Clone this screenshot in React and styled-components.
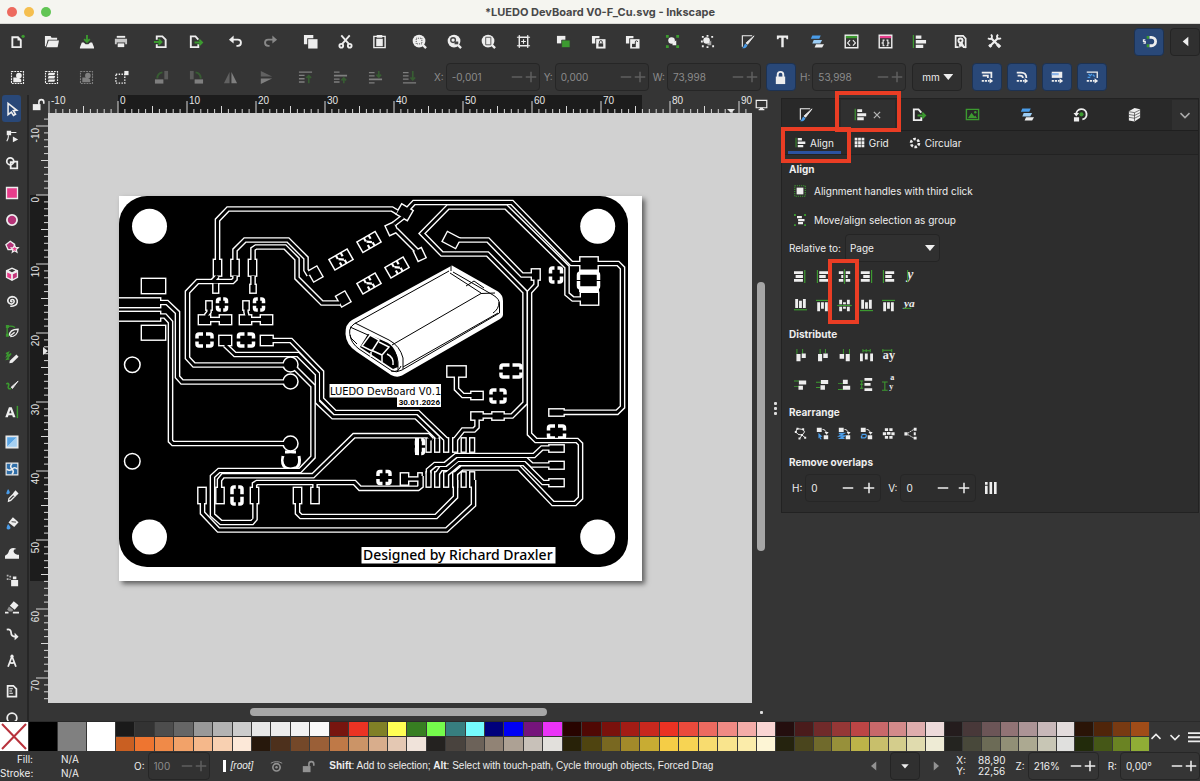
import React, { useId } from 'react'
import styled, { createGlobalStyle } from 'styled-components';

const GlobalStyle = createGlobalStyle`
  *{
       box-sizing:border-box;
  }
  body {
    margin: 0;
    padding: 0;
    background:#353535;
    color:#eee;
    font-family:Inter, "Liberation Sans", sans-serif;
    font-size:10px;
    line-height:14px;
  }
  button,input,select{
       font:inherit;
       color:inherit;
       margin:0;
       padding:0;
       border:0;
       background:transparent;
       outline:0;
  }
  h1,h2,p{
       margin:0;
       padding:0;
       font-size:inherit;
  }
`;

const green = '#3c9a30';
const blue = '#4a9ce8';
const pink = '#e83e8c';

const Window = styled.div`
height:100vh;
display:flex;
flex-direction:column;
overflow:hidden;
`;
const TitleBar = styled.header`
     height:24px;
     flex:none;
     display:grid;
     grid-template-columns:1fr auto 1fr;
     align-items:center;
     background:#f5f5f0;
     border-bottom:1px solid #d8d8d4;
     color:#484848;
     `;
const Lights = styled.div`
     display:flex;
     gap:7px;
     padding-left:7px;
     `;
const Light = styled.button`
     width:10px;
     height:10px;
     border-radius:50%;
     background:${props => props.$color};
     `;
const Title = styled.h1`
     font-size:11px;
     font-weight:700;
     `;
const Toolbar = styled.div`
     height:${props => props.$tall ? '36px' : '35px'};
     flex:none;
     display:flex;
     align-items:center;
     `;
const IconRow = styled.div`
     display:flex;
     flex:0 1 ${props => props.$basis};
     gap:6px;
     `;
const IconGroup = styled.div`
     display:flex;
     flex:${props => props.$n} 1 0;
     `;
const ToolButton = styled.button`
     height:28px;
     flex:1 1 0;
     min-width:0;
     display:flex;
     align-items:center;
     justify-content:center;
     opacity:${props => props.$dim ? 0.4 : 1};
     `;
const BlueButton = styled.button`
     width:30px;
     height:28px;
     flex:none;
     display:flex;
     align-items:center;
     justify-content:center;
     background:${props => props.$plain ? '#303030' : '#294878'};
     border:1px solid ${props => props.$plain ? '#242424' : '#1d3252'};
     border-radius:4px;
     `;
const ButtonRow = styled.div`
     display:flex;
     gap:${props => props.$gap};
     margin-left:${props => props.$left};
     `;
const Svg = styled.svg`
     display:block;
     flex:none;
     fill:currentColor;
     overflow:visible;
     `;

const FieldGroup = styled.div`
     display:flex;
     align-items:center;
     gap:${props => props.$tight ? '2px' : '3px'};
     margin-left:${props => props.$left || '4px'};
     color:${props => props.$tight ? '#8c8c8c' : '#eee'};
     `;
const FieldBox = styled.div`
     display:flex;
     align-items:center;
     width:${props => props.$w};
     height:28px;
     padding-left:5px;
     padding-right:1px;
     border:1px solid #262626;
     border-radius:4px;
     background:${props => props.$off ? '#323232' : 'transparent'};
     color:${props => props.$off ? '#8c8c8c' : '#eee'};
     `;
const FieldInput = styled.input`
     flex:1;
     width:0;
     min-width:0;
     `;
const StepButton = styled.button`
     width:${props => props.$w};
     height:20px;
     display:flex;
     align-items:center;
     justify-content:center;
     opacity:${props => props.$off ? 0.5 : 1};
     `;
const SelectWrap = styled.div`
     position:relative;
     width:${props => props.$w};
     height:28px;
     margin-left:${props => props.$left || '0'};
     `;
const SelectBox = styled.select`
     width:100%;
     height:100%;
     padding-left:${props => props.$pad || '4px'};
     appearance:none;
     border:1px solid #242424;
     border-radius:4px;
     background:#303030;
     `;
const SelectArrow = styled.span`
     position:absolute;
     right:${props => props.$right || '5px'};
     top:11px;
     width:10px;
     height:6px;
     background:#eee;
     clip-path:polygon(0 0, 100% 0, 50% 100%);
     pointer-events:none;
     `;

const Body = styled.div`
     flex:1;
     min-height:0;
     display:flex;
     `;
const Toolbox = styled.nav`
     width:29px;
     flex:none;
     overflow:hidden;
     border-right:2px solid #262626;
     `;
const ToolGroup = styled.div`
     padding-bottom:3px;
     `;
const Tool = styled.button`
     width:19px;
     height:27px;
     margin-left:2px;
     display:flex;
     align-items:center;
     justify-content:center;
     border-radius:3px;
     background:${props => props.$active ? '#294878' : 'transparent'};
     `;
const Editor = styled.main`
     flex:1;
     min-width:0;
     display:grid;
     grid-template-columns:19px 1fr 18px;
     grid-template-rows:18px 1fr 18px;
     `;
const Corner = styled.div`
     display:flex;
     align-items:center;
     justify-content:center;
     `;
const RulerBox = styled.div`
     overflow:hidden;
     font-family:"Liberation Sans", sans-serif;
     font-size:10px;
     `;
const Canvas = styled.div`
     background:#d1d1d1;
     overflow:hidden;
     padding:83px 0 0 71px;
     `;
const Page = styled.svg`
     display:block;
     width:523px;
     height:385px;
     background:#fff;
     box-shadow:3px 3px 5px rgba(0,0,0,0.55);
     `;
const VTrack = styled.div`
     display:grid;
     grid-template-rows:169fr 269fr 152fr;
     justify-content:center;
     `;
const HTrack = styled.div`
     display:grid;
     grid-template-columns:202fr 297fr 205fr;
     align-content:center;
     `;
const Thumb = styled.div`
     grid-row:${props => props.$across ? 1 : 2};
     grid-column:${props => props.$across ? 2 : 1};
     min-width:8px;
     min-height:8px;
     border-radius:4px;
     background:#a6a6a6;
     `;
const Handle = styled.div`
     width:11px;
     flex:none;
     display:flex;
     flex-direction:column;
     align-items:center;
     justify-content:center;
     gap:2px;
     `;
const Dot = styled.i`
     width:3px;
     height:3px;
     border-radius:1px;
     background:#ddd;
     `;
const Side = styled.aside`
     flex:0 0 419px;
     padding:3px 1px 0 0;
     background:#353535;
     `;
const Panel = styled.section`
     position:relative;
     border:1px solid #222;
     background:#2d2d2d;
     padding-bottom:6px;
     `;
const TabBar = styled.div`
     height:32px;
     display:flex;
     align-items:center;
     padding-left:5px;
     background:#292929;
     border-bottom:1px solid #1f1f1f;
     `;
const Tab = styled.button`
     width:${props => props.$active ? '54px' : '36px'};
     height:30px;
     margin-right:${props => props.$active ? '5px' : '18px'};
     display:flex;
     align-items:center;
     justify-content:center;
     gap:5px;
     background:${props => props.$active ? '#303030' : 'transparent'};
     `;
const MoreTabs = styled.button`
     width:26px;
     height:30px;
     margin-left:auto;
     display:flex;
     align-items:center;
     justify-content:center;
     background:#303030;
     color:#aaa;
     `;
const SubTabs = styled.div`
     height:24px;
     display:flex;
     gap:6px;
     padding-left:6px;
     background:#2a2a2a;
     border-bottom:1px solid #222;
     `;
const SubTab = styled.button`
     display:flex;
     align-items:center;
     gap:4px;
     padding:3px 7px 0;
     border-bottom:3px solid ${props => props.$active ? '#2b52a0' : 'transparent'};
     `;
const Heading = styled.h2`
     padding-left:7px;
     height:14px;
     margin-top:${props => props.$top || '7px'};
     font-weight:700;
     `;
const Option = styled.button`
     display:flex;
     align-items:center;
     gap:8px;
     height:29px;
     padding-left:12px;
     `;
const PanelRow = styled.div`
     display:flex;
     align-items:center;
     gap:4px;
     height:${props => props.$h || '28px'};
     padding-left:7px;
     `;
const Strip = styled.div`
     display:flex;
     height:29px;
     padding-left:7px;
     `;
const StripButton = styled.button`
     width:22px;
     display:flex;
     align-items:center;
     justify-content:center;
     `;
const Mark = styled.div`
     position:absolute;
     left:${props => props.$x}px;
     top:${props => props.$y}px;
     width:${props => props.$w}px;
     height:${props => props.$h}px;
     border:4px solid #ea3d24;
     pointer-events:none;
     `;

const Palette = styled.div`
     height:30px;
     flex:none;
     display:flex;
     border-top:1px solid #2a2a2a;
     `;
const BigSwatch = styled.button`
     width:28px;
     height:29px;
     flex:none;
     margin-right:1px;
     background:${props => props.$color};
     `;
const Swatches = styled.div`
     flex:1;
     display:grid;
     grid-template-rows:14px 14px;
     row-gap:1px;
     `;
const SwatchRow = styled.div`
     display:grid;
     grid-template-columns:repeat(34, 26fr) repeat(20, 25fr);
     `;
const Swatch = styled.button`
     background:${props => props.$color};
     border-right:1px solid #3a3a3a;
     `;
const PaletteTools = styled.div`
     width:50px;
     flex:none;
     display:flex;
     align-items:center;
     justify-content:flex-end;
     gap:7px;
     `;

const StatusBar = styled.footer`
     height:30px;
     flex:none;
     display:flex;
     align-items:center;
     white-space:nowrap;
     `;
const FillStroke = styled.dl`
     width:130px;
     margin:0;
     display:grid;
     grid-template-columns:33px auto;
     column-gap:28px;
     text-align:right;
     dd{
          margin:0;
          text-align:left;
     }
     `;
const Layer = styled.button`
     margin-left:13px;
     padding-left:5px;
     border-left:3px solid #fff;
     font-family:"Liberation Sans", sans-serif;
     font-style:italic;
     line-height:12px;
     `;
const StatusIcon = styled.button`
     margin-left:${props => props.$left};
     opacity:0.5;
     `;
const Hint = styled.p`
     flex:1;
     margin-left:14px;
     font-family:"Liberation Sans", sans-serif;
     `;
const Position = styled.div`
     display:grid;
     grid-template-columns:auto auto;
     column-gap:12px;
     line-height:11px;
     margin-left:14px;
     `;

const ln = { fill: 'none', stroke: 'currentColor', strokeWidth: 2 };
const thin = { fill: 'none', stroke: 'currentColor', strokeWidth: 1.2 };
const dark = '#353535';
const serif = { fontSize: 12, fontWeight: 700, fontFamily: 'Liberation Serif, serif' };
const rule = { fill: 'none', stroke: green, strokeWidth: 1.3 };

const icons = {
     new: <><path {...ln} d="M2.500 3.500h6l3 3v7.500h-9z" /><path d="M8 3v4h4z" /><circle cx="14" cy="2.500" r="1.800" fill={green} /></>,
     open: <><path d="M1 2h6l1 2h6v2H4l-2 7H1z" /><path d="M5 7h11l-1.500 7H2.500z" /></>,
     save: <><path d="M3 9h2l2 2h3l2-2h2l2 5v1.500H1V14z" /><path stroke={green} strokeWidth="2" fill="none" d="M8.500 1v7M5.500 5.500l3 3 3-3" /></>,
     print: <><path d="M4 2h9v2H4z" /><path opacity="0.800" d="M2 5h13v6h-2V9H4v2H2z" /><path d="M5 10h7v4H5z" /></>,
     import: <><path {...ln} d="M4 6V2.500h6l3.500 3.500v8H4V11" /><path stroke={green} strokeWidth="2" fill="none" d="M1 8.500h7M6 5.500l3 3-3 3" /></>,
     export: <><path {...ln} d="M11 6L8 2.500H3v11.500h8V11" /><path stroke={green} strokeWidth="2" fill="none" d="M7 9h7M12 6l3 3-3 3" /></>,
     undo: <><path {...ln} d="M4 6h6.500a3.300 3.300 0 0 1 0 6.600H9" /><path d="M6 1.500V10L1 6z" /></>,
     redo: <g opacity="0.450"><path {...ln} d="M12 6H5.500a3.300 3.300 0 0 0 0 6.600H7" /><path d="M10 1.500V10l5-4z" /></g>,
     copy: <><path d="M1 1h10v3.500H4.500V11H1z" /><path d="M5.500 5.500h10v10h-10z" /></>,
     cut: <><path {...ln} d="M3.500 1.500l8 9M12.500 1.500l-8 9" /><circle {...ln} cx="3.500" cy="12.500" r="2" /><circle {...ln} cx="12.500" cy="12.500" r="2" /></>,
     paste: <><path {...ln} strokeWidth="1.500" d="M2 2.500h12v12H2z" /><path d="M5 1h6v3H5zM4.500 5h7v8h-7z" /></>,
     zoomSel: <><circle cx="7.500" cy="7.500" r="6.800" /><path stroke="currentColor" strokeWidth="2.500" d="M11 11l4 4" /><path d="M4.500 4.500h6v6h-6z" fill="none" stroke="#444" strokeDasharray="1 1" /></>,
     zoomDraw: <><circle cx="7.500" cy="7.500" r="6.800" /><path stroke="currentColor" strokeWidth="2.500" d="M11 11l4 4" /><circle cx="6.500" cy="6.500" r="2.500" fill="none" stroke="#444" strokeWidth="1.500" /><path d="M8 8h4v3H8z" fill="#444" /></>,
     zoomPage: <><circle cx="7.500" cy="7.500" r="6.800" /><path stroke="currentColor" strokeWidth="2.500" d="M11 11l4 4" /><path d="M5 3.500h5.500v8H5z" fill="none" stroke="#555" /></>,
     zoomCenter: <><path {...thin} strokeWidth="1.500" d="M3.500 3.500h9v9h-9z" /><path {...thin} d="M8 5.500v5M5.500 8h5M3.500 1v2.500H1M12.500 1v2.500H15M3.500 15v-2.500H1M12.500 15v-2.500H15" /></>,
     dup: <><path d="M1 2h9v8H1z" /><path fill={green} d="M6 6.500h9v8H6z" stroke={dark} strokeWidth="0.800" /></>,
     clone: <><path d="M1 2h8v2.500H4.500V10H1z" /><path d="M5.500 5.500h10v10h-10z" /><path fill={dark} d="M8 10h5v3.500H8z" /><path d="M9 10V8.500a1.500 1.500 0 0 1 3 0V10" fill="none" stroke={dark} /></>,
     unlink: <><path d="M1 2h8v2.500H4.500V10H1z" /><path d="M5.500 5.500h10v10h-10z" /><path fill={dark} d="M7.500 10.500h4V14h-4z" /><path d="M11 11V8.500a1.200 1.200 0 0 1 2.500 0" fill="none" stroke={dark} /></>,
     group: <><circle cx="7" cy="7" r="3.500" /><path d="M8 9l4-2v5H8z" /><path fill={green} d="M1 1h3v3H1zM12 1h3v3h-3zM1 12h3v3H1zM12 12h3v3h-3z" /></>,
     ungroup: <><circle cx="7" cy="7" r="3.500" /><path opacity="0.600" d="M8 10l4-3v5H8z" /><path d="M2 2h2v2H2zM7 1h2v2H7zM12 2h2v2h-2zM1 7h2v2H1zM2 12h2v2H2zM7 13h2v2H7zM13 12h2v2h-2z" /></>,
     fill: <><path {...thin} d="M2.500 13.500V1.800H13" /><path d="M15 2L8 11 6.500 9.500z" stroke="currentColor" /><path fill={blue} d="M5.500 10l2.500 2C6.500 15.500 4 15.500 2 15c2-.5 2-3 3.500-5z" /></>,
     text: <path d="M2 1.500h12v4h-1.700L11.800 4H9.300v10h-2.600V4H4.200l-.5 1.500H2z" />,
     layers: <><path fill={blue} d="M3.500 1.500h9L11 5H2z" /><path fill="#9ccdf5" d="M5 6.500h9L12 10H3.500z" /><path d="M7.500 11h8.500l-2 3.500H6z" /></>,
     xml: <><path {...thin} strokeWidth="1.500" d="M1.300 1.300h13.400v13.400H1.300z" /><path fill={green} d="M2 2h12v2.500H2z" /><path {...thin} d="M6.500 6.500L3.800 9.500l2.700 3M9.500 6.500l2.700 3-2.700 3" /></>,
     selectors: <><path {...thin} strokeWidth="1.500" d="M1.300 1.300h13.400v13.400H1.300z" /><path fill={pink} d="M2 2h12v2.500H2z" /><path {...thin} d="M7 6.500H5.500V9l-1 .5 1 .5v2.500H7M9 6.500h1.500V9l1 .5-1 .5v2.500H9" /></>,
     align: <><path fill={green} d="M.8 1h1.400v14H.8z" /><path d="M4 1.500h6v3.500H4zM4 6.500h11V10H4zM4 11.500h8V15H4z" /></>,
     docprops: <><path {...ln} strokeWidth="1.800" d="M6 14H2.800V2h8L13.500 5v9h-3" /><circle cx="8" cy="7" r="2.200" {...ln} /><path d="M6 10l1 5 1.500-2 5 2.500L10 9z" /></>,
     prefs: <><path {...ln} strokeWidth="2.300" d="M4.500 4.500l9 9M11.500 4.500l-9 9" /><path {...ln} d="M1 4.500q3 2 4-.5T4 1M15 4.500q-3 1.500-4-.5t1-3" /><path {...ln} strokeWidth="3.400" d="M11 11l3 3M4.500 11.500l-2 2" /></>,
     snap: <><path fill="none" stroke="currentColor" strokeWidth="3" d="M8 3.500h2a4.500 4.500 0 0 1 0 9H8" /><path fill={green} d="M5 2h2.500v3H5zM5 11h2.500v3H5z" /><path {...thin} d="M3.500 6.300H1.500V8h2v1.700h-2" /></>,
     left: <path d="M11 3v10L5 8z" />,
     selAll: <><path {...thin} strokeDasharray="2 1" d="M1.600 1.600h12.800v12.800H1.600z" /><circle cx="9.500" cy="6" r="3" /><path d="M3.500 8h5l3.500 2v3H3.500z" /></>,
     selLayers: <><path {...thin} strokeDasharray="2 1" d="M1.600 1.600h12.800v12.800H1.600z" /><path d="M5 3h7l-1 2.500H4zM5 6.500h7l-1 2.500H4zM5 10h7l-1 2.500H4z" /></>,
     selTouch: <><path {...thin} strokeWidth="1.500" strokeDasharray="1.500 1.500" d="M2 4.500h9.500V14H2z" /><path d="M11 1h4.500v4.500H11z" /></>,
     rotL: <><path d="M1 10h9v4.500H1z" /><path opacity="0.500" d="M11 1h4v9h-4z" /><path stroke={green} fill="none" strokeWidth="2" d="M3.500 9C3.500 5 6 3 9 2.500" /></>,
     rotR: <><path d="M6 10h9v4.500H6z" /><path opacity="0.500" d="M1 1h4v9H1z" /><path stroke={green} fill="none" strokeWidth="2" d="M12.500 9c0-4-2.500-6-5.500-6.500" /></>,
     flipH: <><path opacity="0.600" d="M7 2v12H1z" /><path d="M9 2v12h6z" /></>,
     flipV: <><path opacity="0.600" d="M3 7V1l12 6z" /><path d="M3 9v6l12-6z" /></>,
     top: <><path d="M1 1.500h14v1.500H1zM1 5h6v1.500H1zM1 8.500h6v1.500H1zM1 12h6v1.500H1z" /><path stroke={green} fill="none" strokeWidth="1.800" d="M11.500 14V6M9 8.500L11.500 6 14 8.500" /></>,
     raise: <><path d="M1 1.500h6v1.500H1zM1 5h14v2H1zM1 9h6v1.500H1zM1 12h6v1.500H1z" /><path stroke={green} fill="none" strokeWidth="1.800" d="M11.500 14V9M9 11l2.500-2.500L14 11" /></>,
     lower: <><path d="M1 2h6v1.500H1zM1 5.500h6v1.500H1zM1 9h14v2H1zM1 13h6v1.500H1z" /><path stroke={green} fill="none" strokeWidth="1.800" d="M11.500 1v6M9 5l2.500 2.500L14 5" /></>,
     bottom: <><path d="M1 2h6v1.500H1zM1 5.500h6v1.500H1zM1 9h6v1.500H1zM1 13h14v1.500H1z" /><path stroke={green} fill="none" strokeWidth="1.800" d="M11.500 1v9M9 8l2.500 2.500L14 8" /></>,
     lock: <><path d="M3 7h10v8H3z" /><path {...ln} d="M5 8V5a3 3 0 0 1 6 0v3" /></>,
     unlock: <><path d="M1 7.500h9.500V15H1z" /><path {...ln} d="M8.500 8V5a3 3 0 0 1 6 0v2" /></>,
     scaleStroke: <><path {...ln} d="M2 3h11v6M3 6.500h6V9" /><path {...ln} strokeDasharray="2.500 1" d="M2 12.500h9" /><path d="M11 9.500l4 3-4 3z" /></>,
     scaleCorner: <><path {...ln} d="M2 3h5q6 0 6 6M3 6.500h2.500Q9 6.500 9 9" /><path {...ln} strokeDasharray="2.500 1" d="M2 12.500h9" /><path d="M11 9.500l4 3-4 3z" /></>,
     moveGrad: <><path d="M2 2h12v7H2z" /><path fill="#8ab4e8" d="M2 3.500h8V6H2z" /><path {...ln} strokeDasharray="2.500 1" d="M2 12.500h9" /><path d="M11 9.500l4 3-4 3z" /></>,
     movePat: <><path {...thin} strokeWidth="1.500" d="M2 2.500h12v6.500" /><path fill="none" stroke={blue} strokeWidth="1.500" d="M4 4.500l2 2 2-2M9 5.500l2 2M3 8.500h3" /><path {...ln} strokeDasharray="2.500 1" d="M2 12.500h9" /><path d="M11 9.500l4 3-4 3z" /></>,
     pointer: <path {...ln} strokeWidth="1.800" d="M3.500 1.500l10 8-4 .5 2.500 4-2.300 1.300L7.300 11.500l-3.800 3z" />,
     node: <><path d="M2 2h5v5H2zM9 8.500l6 3.500-6 3z" /><path {...thin} d="M7 4h6M4 7q0 4-2 7" /></>,
     builder: <><circle {...ln} cx="6" cy="6" r="4" /><path {...ln} d="M9.500 6.500h4.500V14H6.500V7h4" /></>,
     rect: <path fill={pink} stroke="currentColor" strokeWidth="1.500" d="M1.700 1.700h12.600v12.600H1.700z" />,
     circle: <circle fill="#b53478" stroke="currentColor" strokeWidth="2" cx="8" cy="8" r="5.800" />,
     star: <><path fill="#b53478" stroke="currentColor" strokeWidth="1.500" d="M6 1.500L11 5 9.500 11h-6L1 5.500z" /><path fill={pink} stroke="currentColor" strokeWidth="1.300" d="M11 6l1.200 2.500 3 .3-2.300 2 .8 3.200-2.700-1.600L8.300 14l.8-3.200L7 9l3-.4z" /></>,
     box: <><path fill="#eee" d="M8 .5l7 3.300v8.500L8 16l-7-3.700V3.800z" /><path fill={pink} d="M2.500 6.200L7 8.200v5.500l-4.500-2.400z" /><path fill="#c2367a" d="M13.500 6.200L9 8.200v5.500l4.500-2.400z" /><path fill={dark} d="M8 2.200l3.800 1.900L8 6 4.200 4.100z" /></>,
     spiral: <path {...ln} strokeWidth="1.800" d="M8.500 8.500q-1.500 1-2-.5c0-2 3.500-2.500 4 .3 0 3-3.500 4-5.500 2.500C1.500 8 3.500 3.500 8 3c4 0 6.500 3 6 6.500-.5 3-4 5-8 4.500" />,
     pen: <><path {...ln} strokeWidth="1.500" d="M5 13.500c0-5 4-7.500 10-7.500 0 5-4 8.500-9 8.500M6 13.500l5-4" /><path stroke={green} fill="none" strokeWidth="1.500" d="M2.500 13V3q5-1.500 9 1" /><path fill={green} d="M1 1h3.500v3.500H1zM1 11h3.500v3.500H1z" /></>,
     pencil: <><path d="M13 4l2.500 2.500-7 7L5 14l.5-3z" /><path stroke={green} fill="none" strokeWidth="1.500" d="M1 3l3-1.500L2 6l5-3-5 6.500 3-.5" /></>,
     calli: <><path d="M15 3.500L8.500 12 7 10.500z" stroke="currentColor" /><path stroke={green} fill="none" strokeWidth="1.800" d="M1.500 7C4 5 5 7 4 9s0 4 3 3" /></>,
     textTool: <><path d="M4.500 2.500h3.200L12 14H9l-.7-2.300H4L3.300 14H.3zm1.600 3L4.800 9.400h2.700z" /><path fill={green} d="M13.300 1H15v14h-1.700z" /></>,
     gradient: <><path fill="#dcecf9" stroke="currentColor" strokeWidth="1.500" d="M1.300 1.300h13.400v13.400H1.300z" /><path fill="#5aa5e4" d="M2.500 2.500h11L2.500 13.500z" /><path fill="#a5cff1" d="M13.500 2.500v11h-11z" /></>,
     mesh: <><path fill="#2f6ea8" stroke="currentColor" strokeWidth="1.300" d="M1.300 1.300h13.400v13.400H1.300z" /><path {...ln} strokeWidth="1.800" d="M8 2q-3 3 0 6t0 6M2 8q3 3 6 0t6 0" /></>,
     dropper: <><path {...thin} strokeWidth="1.500" d="M4 14l.5-3 5-5 2 2-5 5z" /><path d="M9 5l3-3.500 3.500 3.500L12 8.500z" /><path fill={blue} d="M3.500 0q4 5 0 6t0-6z" /></>,
     bucket: <><path d="M9 1.500l6.500 5.500-5 5.500-6.500-5z" /><path fill="none" stroke={dark} d="M7.500 6.500l5 .5" /><path fill={blue} d="M3.500 9q5 5 1 6.500-5 0-1-6.500z" /></>,
     tweak: <path d="M0 14.500V11q3-1 4-4c1-5 6-6 9-3.500-4 0-4 4-1 5.500q2 1 4 1v4.500z" />,
     spray: <><path d="M7 8h8v7H7zM9 4h4v3H9z" /><path opacity="0.700" d="M2 2h2v2H2zM5 3h2v2H5zM2 6h2v2H2zM5 6.500h1.500V8H5z" /></>,
     eraser: <><path d="M10 1.500l5.500 4.500-4.500 5L5.500 6.500z" /><path opacity="0.500" d="M4.500 7.500l5 4L8 13H5L2.500 11z" /><path d="M0 13.500h4V15.500H0zM9 13.500h7V15.500H9z" /></>,
     connector: <><path {...ln} d="M2 3q5-1 5 3.500T12 11" /><path d="M11 6.500l4.500 4.500L11 15z" /></>,
     measure: <><path {...ln} d="M8 2.500L3.500 14.500M8 2.500L12.500 14.500M5 9.500q3 2 6 0" /><circle cx="8" cy="2.500" r="1.800" /></>,
     pages: <><path {...ln} d="M3 2h6.500L13 5.500V14.500H3z" /><path {...thin} d="M5 5.500h4M5 8h3M5 10.500h4" /></>,
     zoom: <><circle {...ln} cx="8" cy="8" r="5.500" /><path {...ln} d="M11 11l4 4" /></>,
     display: <><path {...thin} strokeWidth="1.500" d="M1.500 3h13v9h-13z" /><path d="M6 12h4v2H6zM4.500 13.500h7V15h-7z" /></>,
     close: <path {...ln} opacity="0.700" d="M3 3l10 10M13 3l-10 10" />,
     image: <><path fill="none" stroke={green} strokeWidth="1.500" d="M1.500 2.500h13v11h-13z" /><path fill={green} d="M3 12l4-6 3 4 1-1 2 3z" /><circle cx="11" cy="5.500" r="1.300" fill={green} /></>,
     history: <><path {...ln} d="M3.500 8a5.500 5.500 0 1 1 6.500 5.200" /><path d="M.5 6.500h6l-3 3.500zM1 11h5.500v4.500H1z" /><circle cx="9" cy="7.800" r="2.200" fill={green} /></>,
     objects: <><path d="M2 4.500l6-3.500 6 1.500v9L8 15.500l-6-1z" /><path stroke={dark} fill="none" strokeWidth="0.700" d="M2 5l6 1 6-3M2 8l6 1 6-3M2 11l6 1 6-3M8 6v9" /></>,
     down: <path {...ln} d="M2 5.500L8 11.500l6-6" />,
     up: <path {...ln} d="M2 10.500L8 4.500l6 6" />,
     grid: <path d="M1 1h4v4H1zM6 1h4v4H6zM11 1h4v4h-4zM1 6h4v4H1zM6 6h4v4H6zM11 6h4v4h-4zM1 11h4v4H1zM6 11h4v4H6zM11 11h4v4h-4z" />,
     circular: <circle fill="none" stroke="currentColor" strokeWidth="3.500" strokeDasharray="3.400 2.100" cx="8" cy="8" r="5.300" />,
     handles: <><path fill="none" stroke={green} strokeWidth="1.500" strokeDasharray="1.500 1.300" d="M1 1h14v14H1z" /><path d="M3.500 3.500h9v9h-9z" /></>,
     asGroup: <><path d="M4 2.500h6.500v3H4zM5.500 6.600H14v3H5.500zM5.500 10.700h6.500v3H5.500z" /><path fill={green} d="M0 0h2.500v2.500H0zM13.500 0H16v2.500h-2.500zM0 13.500h2.500V16H0zM13.500 13.500H16V16h-2.500z" /></>,
     aRightOut: <><path d="M0 1.500h11V5H0zM2 6.300h9v3.500H2zM0 11h11v3.500H0z" /><path fill={green} d="M12.500 0H14v16h-1.500z" /></>,
     aLeft: <><path d="M4 1.500h11V5H4zM4 6.300h8v3.500H4zM4 11h11v3.500H4z" /><path fill={green} d="M1 0h1.500v16H1z" /></>,
     aCenter: <><path d="M1 1.500h14V5H1zM4 6.300h8v3.500H4zM1 11h14v3.500H1z" /><path fill={dark} d="M6.500 0h3v16h-3z" /><path fill={green} d="M7.300-1h1.400v18H7.300z" /></>,
     aRight: <><path d="M1 1.500h11V5H1zM4 6.300h8v3.500H4zM1 11h11v3.500H1z" /><path fill={green} d="M13.500 0H15v16h-1.500z" /></>,
     vText: <><text x="0" y="10" {...serif} fontSize="14" fontStyle="italic">ya</text><path {...rule} d="M-1 11.500h10" /></>,
     hText: <><text x="4" y="11" {...serif} fontSize="17" fontStyle="italic">y</text><path {...rule} d="M4.500 0v15" /></>,
     dText: <><text x="1" y="12" {...serif} fontSize="15">ay</text><path {...rule} d="M1 1.500h11M1 0v4M12 0v4" /></>,
     dTextV: <><text x="10" y="3" {...serif} fontSize="10">a</text><text x="9" y="14" {...serif} fontSize="10">y</text><path {...rule} d="M3.500 5v10M0 5h7M0 15h7" /></>,
     dLeft: <><path fill={green} d="M3 0h1.200v6H3zM10 0h1.200v6H10z" /><path d="M3 6h5v9H3zM9.500 5.500h5V11h-5z" /></>,
     dCenter: <><path fill={green} d="M4.500 0h1.200v6H4.500zM11 0h1.200v5H11z" /><path d="M2.500 6h5v9h-5zM9 5.500h5.500V11H9z" /></>,
     dRight: <><path fill={green} d="M6 0h1.200v6H6zM13.500 0h1.200v6h-1.200z" /><path d="M2 6h5.500v6H2zM9.500 6h5v9h-5z" /></>,
     dGap: <><path fill={green} d="M3 0h1.200v4H3zM7 0h1.200v4H7zM12 0h1.200v4H12zM3 1.500h10v1.200H3z" /><path d="M0 5.500h3.500V15H0zM6 5.500h3.500V13H6zM12.500 5.500H16V15h-3.500z" /></>,
     swapA: <><path d="M1 1h6v5H1zM9.500 10h5.500v5H9.500z" /><path {...thin} d="M8 3q4 0 5 5" /><path d="M10.500 6h5L13 9.500z" /><path fill={blue} d="M3 7l5 5-2.500.3L7 15H5l-.8-2L3 14z" /></>,
     swapB: <><path d="M1 1h6v5H1zM9.500 10h5.500v5H9.500z" /><path {...thin} d="M8 3q4 0 5 5" /><path d="M10.500 6h5L13 9.500z" /><path fill="none" stroke={blue} strokeWidth="1.800" d="M1 8h6l-5 3h6l-5 3h5" /></>,
     swapC: <><path d="M1 1h6v5H1zM9.500 10h5.500v5H9.500z" /><path {...thin} d="M8 3q4 0 5 5" /><path d="M10.500 6h5L13 9.500z" /><path fill="none" stroke={blue} strokeWidth="1.500" d="M2 9h5q2 2-1 4.500H2q-1-2 1-3" /></>,
     rGraph: <><path {...thin} d="M4 2l7 1 2 3-3 4 3.500 3M2 6l3 3 5 1M4 2L2 6M7 14l3-4" /><path d="M3 .8h2.500v2.500H3zM10 1.500h2.500V4H10zM1 5h2.500v2.500H1zM8.500 8.500H11V11H8.500zM12.500 12H15v2.500h-2.500zM5.500 13H8v2.500H5.500z" /></>,
     rRandom: <path d="M3.500 1.500h4V5h-4zM9 1.500h4V5H9zM1 6.500h4V10H1zM6 6h4.500v3.500H6zM11.500 6.500h4V10h-4zM3.500 11h4v3.500h-4zM9 11h4v3.500H9z" />,
     rUnclump: <><path d="M.5 6.500h4v4h-4zM12 1h3.500v3.500H12zM12 12h3.500v3.500H12zM12 6.500h2.500V10H12z" /><path {...thin} strokeDasharray="2 1" d="M5 7.500L12 3M5 9.500l7 4" /></>,
     overlap: <path d="M0 0h3.500v3.500H0zM0 5h3.500v11H0zM6 0h3.500v16H6zM12 0h3.500v16H12z" />,
     eye: <><path {...thin} d="M1 4q7-4 14 0" /><circle {...ln} cx="8" cy="9" r="4.500" /><circle cx="8" cy="9" r="1.500" /></>,
     menu: <path d="M0 1.500h16v2.500H0zM0 7h16v2.500H0zM0 12.500h16V15H0z" />,
     triL: <path d="M11 2v12L4 8z" />,
     triR: <path d="M5 2v12l7-6z" />,
     triD: <path d="M2 5h12l-6 7z" />,
     minus: <path d="M1 7h14v2H1z" />,
     plus: <path d="M1 7h6V1h2v6h6v2H9v6H7V9H1z" />,
};
// the vertical alignment icons are the horizontal ones turned a quarter
const turned = { vBottomOut: 'aRightOut', vTop: 'aLeft', vMiddle: 'aCenter', vBottom: 'aRight', dTop: 'dLeft', dMid: 'dCenter', dBot: 'dRight', dGapV: 'dGap' };

const Icon = ({ name, size = 15 }) => (
     <Svg viewBox="0 0 16 16" width={size} height={size} aria-hidden="true">
          {turned[name]
               ? <g transform={name[0] === 'v' ? 'rotate(90 8 8)' : 'matrix(0 1 1 0 0 0)'}>{icons[turned[name]]}</g>
               : icons[name]}
     </Svg>
);

const NumberField = ({ label, value, width, step = '14px', off, tight, left }) => {
     const id = useId();
     return (
          <FieldGroup $tight={tight} $left={left}>
               <label htmlFor={id}>{label}</label>
               <FieldBox $w={width} $off={off}>
                    <FieldInput id={id} defaultValue={value} disabled={off} />
                    <StepButton $w={step} $off={off} disabled={off} aria-label="Decrease"><Icon name="minus" size={12} /></StepButton>
                    <StepButton $w={step} $off={off} disabled={off} aria-label="Increase"><Icon name="plus" size={12} /></StepButton>
               </FieldBox>
          </FieldGroup>
     );
}

const commands = [
     ['new', 'open', 'save', 'print'],
     ['import', 'export'],
     ['undo', 'redo'],
     ['copy', 'cut', 'paste'],
     ['zoomSel', 'zoomDraw', 'zoomPage', 'zoomCenter'],
     ['dup', 'clone', 'unlink'],
     ['group', 'ungroup'],
     ['fill', 'text', 'layers', 'xml', 'selectors', 'align'],
     ['docprops', 'prefs'],
];
const selection = [
     ['selAll', 'selLayers', 'selAll', 'selTouch'],
     ['rotL', 'rotR', 'flipH', 'flipV'],
     ['top', 'raise', 'lower', 'bottom'],
];
const tools = [
     ['pointer', 'node', 'builder'],
     ['rect', 'circle', 'star', 'box', 'spiral'],
     ['pen', 'pencil', 'calli', 'textTool'],
     ['gradient', 'mesh', 'dropper', 'bucket'],
     ['tweak', 'spray', 'eraser', 'connector', 'measure'],
     ['pages', 'zoom'],
];

const IconBar = ({ groups, basis, isDim }) => (
     <IconRow $basis={basis}>
          {groups.map((group, g) => (
               <IconGroup key={g} $n={group.length}>
                    {group.map((name, i) => (
                         <ToolButton key={i} aria-label={name} $dim={isDim && isDim(g, i)}><Icon name={name} /></ToolButton>
                    ))}
               </IconGroup>
          ))}
     </IconRow>
)

const STEP = 69;
const Ruler = ({ vertical }) => {
     const zero = vertical ? 82 : 70;
     const len = vertical ? 590 : 704;
     const pageLen = vertical ? 386 : 524;
     const ticks = [];
     for (let n = -11; n <= 92; n++) {
          const at = zero + n * STEP / 10;
          if (at < 0 || at > len) continue;
          const size = n % 10 === 0 ? 12 : n % 5 === 0 ? 7 : 4;
          ticks.push(vertical ? `M${19 - size} ${at}H19` : `M${at} ${18 - size}V18`);
     }
     const labels = [-10, 0, 10, 20, 30, 40, 50, 60, 70, 80, 90].filter(n => zero + n * STEP / 10 < len && zero + n * STEP / 10 > 0);
     return (
          <RulerBox>
               <svg width={vertical ? 19 : len} height={vertical ? len : 18} fill="#e6e6e6">
                    <rect x={vertical ? 1 : zero} y={vertical ? zero : 0} width={vertical ? 18 : pageLen} height={vertical ? pageLen : 18} fill="#1c1c1c" />
                    <path d={ticks.join('')} stroke="#d8d8d8" strokeWidth="1" fill="none" />
                    {labels.map(n => {
                         const at = zero + n * STEP / 10;
                         return vertical
                              ? <text key={n} transform={`translate(10 ${at + 2}) rotate(-90)`} textAnchor="end">{n}</text>
                              : <text key={n} x={at + 2} y="9">{n}</text>
                    })}
                    {vertical ? <path d="M14 234v8l5-4z" /> : <path d="M679 14h8l-4 4z" />}
               </svg>
          </RulerBox>
     );
}

const traces = [
     'M217.500 262V220L228 209H392L397 212',
     'M235 262V250L245 240H288L306 258V270L309 275',
     'M253 262V249L256 247H285L297 259V278L322 303H340',
     'M235 276V279L232.500 281.500H197.500L187.500 292V358L194 365H284',
     'M217.500 276L213 281', 'M253 276V287', 'M215.500 284V290',
     'M160 302.500H167L177.500 312.500V377L182 382H284',
     'M160 316H165L170.500 322V441L173 443.500H284',
     'M209 308V312L206 316', 'M246 308V312L247 316', 'M208 319.500H222', 'M249 319.500H263',
     'M272 340.500H291L321.500 372V399L335 412.500H418L446.500 440',
     'M225 345L235 354.500H298L317.500 374V402L333 416.700H416L438 438',
     'M295 368L313 386V457L300 470.500H219L212.500 476.500V515L221 522.500H252L255 519V502',
     'M219.500 490V480L223 475.700H313L354 435.700H428L432 440',
     'M254.500 490V484L257 482.500H354.500L360 488.300H418L421 486V476',
     'M202.500 502V513L218.500 530H446.500L473.500 505V480',
     'M297.500 502V513L301 516.500H436L455.500 497V480',
     'M315 490V483',
     'M428.500 474V470L435 464.500H445L456 455.500H534L542 448H552',
     'M437 474L441 468.500H447L458 459.500H526L532 465H552',
     'M446.500 474L459 463.500H524L543 482.500H552',
     'M455 474L462 468H519L553 503.500H575L580.500 498V444L577 440.500H536L529.500 434V292L536 285V278',
     'M455 440L463 430H474L477 427V418', 'M480 416H495',
     'M502 416H512L525 403V292L487.500 254H442L422 233.500L448 207H506L567 267V294L573 299H584',
     'M408 209L414 202.500H512L571.500 263.500H618L622.500 268V407L617 412.300H560',
     'M535 275H522L488 240H458',
     'M456.500 376V389L463 395.500H474',
     'M403 217L394 224', 'M396 230L417 251',
     'M408 479H422',
];
// x, y, width, height, angle
const pads = [
     [214, 260, 7, 15.5], [231.5, 260, 7, 15.5], [249, 260, 7, 15.5],
     [213.5, 283.5, 4.5, 9], [250.5, 285, 5, 7.5],
     [142, 279, 23, 14], [142, 326, 23, 13.5],
     [118, 298.5, 42, 8.5], [118, 312, 42, 8.5],
     [206.5, 301.5, 5, 8], [199, 315.5, 11, 8.5], [220, 315.5, 11, 8.5],
     [243.5, 301.5, 5, 8], [240, 315.5, 11, 8.5], [261, 315.5, 11, 8.5],
     [219.5, 336, 11.5, 9], [261, 336, 11.5, 9],
     [198.5, 488, 7, 15], [216.5, 488, 7, 15], [251, 488, 7, 15], [294, 488, 7, 15], [311.5, 488, 7, 15],
     [426.8, 438.5, 3.5, 13], [435.4, 438.5, 3.5, 13], [444.4, 438.5, 3.5, 13], [453.4, 438.5, 3.5, 13], [461.9, 438.5, 3.5, 13], [470.4, 438.5, 3.5, 13],
     [426.8, 472.5, 3.5, 14], [435.4, 472.5, 3.5, 14], [444.4, 472.5, 3.5, 14], [453.4, 472.5, 3.5, 14], [461.9, 472.5, 3.5, 14], [470.4, 472.5, 3.5, 14],
     [549.5, 445.5, 14, 6], [549.5, 462, 14, 6.5], [549.5, 479.5, 14, 6.5], [549.5, 409.5, 14, 6],
     [580.5, 257.5, 17, 12], [581, 293, 17, 11.5], [532, 269.5, 7.5, 10],
     [447.5, 366.5, 18, 10], [471.5, 392, 11, 7], [471.5, 412.5, 11, 7], [492.5, 412.5, 11, 7],
     [401, 473.5, 7, 11], [418.5, 473.5, 3, 13],
     [398.5, 207, 12, 10.5, 30], [387.5, 224, 8.5, 9.5, -25], [416, 249.5, 7.5, 10, -25],
     [310.5, 268.5, 9.5, 11, -30], [338.5, 293.5, 9.5, 11, -30], [444.5, 235, 14, 10, 28],
];
const caps = [
     [216, 297.5, 12, 14], [253, 297.5, 12, 14], [195.5, 332.5, 18, 15], [237, 332.5, 18, 15],
     [230.5, 485.5, 13, 20], [549, 266.5, 14, 17], [577, 271.5, 23, 18], [499.5, 363.5, 23, 15],
     [489.5, 388.5, 17, 15], [547, 424.5, 19, 15], [415, 438, 10, 17], [376.5, 470, 15, 15],
];
const tilted = [[341, 259.5], [369, 242], [369, 283.5], [397, 267.5]];

const padShape = ([x, y, w, h, a], i) => (
     <rect key={i} x={x} y={y} width={w} height={h} transform={a ? `rotate(${a} ${x + w / 2} ${y + h / 2})` : undefined} />
)

const Board = () => (
     <Page viewBox="119 196 523 385">
          <path d="M147 196H600A28 28 0 0 1 628 224V539A28 28 0 0 1 600 567H147A28 28 0 0 1 119 539V224A28 28 0 0 1 147 196Z" />
          <g fill="#fff">
               <circle cx="149.500" cy="226.300" r="17.500" /><circle cx="597.700" cy="226.300" r="17.500" />
               <circle cx="149.500" cy="537" r="17.500" /><circle cx="597.700" cy="537" r="17.500" />
          </g>
          <g fill="none" stroke="#fff" strokeWidth="3.500">
               {caps.map(([x, y, w, h], i) => <rect key={i} x={x + 1.5} y={y + 1.5} width={w - 3} height={h - 3} rx="2" />)}
          </g>
          <g stroke="#000">
               {caps.map(([x, y, w, h], i) => i === 6
                    ? <path key={i} strokeWidth="1" d={`M${x - 1} ${y + h / 2}h${w + 2}`} />
                    : <path key={i} strokeWidth={w > 13 ? 3 : 2.4} d={`M${x - 1} ${y + h / 2}h${w + 2}M${x + w / 2} ${y - 1}v${h + 2}`} />)}
          </g>
          <path fill="none" stroke="#fff" strokeWidth="4" d="M547 440H566M579 271.500h20M579 290h20M417 438v17" />
          <path fill="none" stroke="#fff" strokeWidth="3" d="M283 456q-2 9 3 12h10q5-3 3-12M285 452h11" />
          <g fill="none" stroke="#fff" strokeWidth="5.700">
               {traces.map((d, i) => <path key={i} d={d} />)}
          </g>
          <g fill="#fff" stroke="#fff" strokeWidth="2.800">{pads.map(padShape)}</g>
          <g stroke="#fff" strokeWidth="1.500">
               <circle cx="132.300" cy="364.700" r="7.800" /><circle cx="132.300" cy="461.300" r="7.800" />
               {[364.5, 381.5, 443.5].map(y => <circle key={y} cx="290.500" cy={y} r="7.500" />)}
               <circle cx="290.500" cy="460.500" r="7" stroke="none" />
          </g>
          <g fill="none" stroke="#000" strokeWidth="2.900">
               {traces.map((d, i) => <path key={i} d={d} />)}
          </g>
          <g>{pads.map(padShape)}</g>
          {tilted.map(([x, y]) => (
               <g key={x + y} transform={`translate(${x} ${y}) rotate(-30)`}>
                    <rect x="-10.500" y="-6" width="21" height="12" stroke="#fff" strokeWidth="1.500" />
                    <path stroke="#fff" strokeWidth="2.200" d="M-2.500 -6V-2M-2.500 2V6M3 -6V-2M3 2V6M-2 -1.500L2.500 1.500" />
               </g>
          ))}
          <path fill="#fff" d="M452 265.500L498 291.500Q503 295 503 301V315Q503 317 500 319L402 375.500Q397 378 391 375L357 352Q346 345 345.500 334Q345 324 352 320Z" />
          <g fill="none" stroke="#000" strokeWidth="1">
               <path d="M453 272L493 295Q500 299 499.500 305V313L402 370Q397 373 391 371" />
               <path d="M449 271L354 324Q347 329 351 338L357 344M355 323L389 340Q400 346 403 358V369" />
               <path d="M350 327L386 343Q397 350 398 362V371M392 345L481 293.500L495 293M403 367L498 313M450 273L481 293M466 286L474 281L484 288M451 271V266M499 302Q499 309 493 313" />
               <path d="M350 335Q351 343 359 349L392 371Q398 373 401 366" />
          </g>
          <path d="M368 334L388 343Q398 349 398 367L393 369L360 347Z" />
          <path fill="none" stroke="#fff" strokeWidth="1.500" d="M362 346L370 335L379 340L372 351ZM371 352V357M371 350L382 355L389 347L379 342M382 355V362M387 354Q394 357 393 365" />
          <rect x="329.500" y="384" width="111.500" height="13.500" fill="#fff" />
          <text x="330" y="395" fontFamily="DejaVu Sans Condensed, sans-serif" fontSize="11">LUEDO DevBoard V0.1</text>
          <rect x="397" y="397" width="44" height="10" fill="#fff" />
          <text x="440" y="405" textAnchor="end" fontFamily="Roboto, sans-serif" fontSize="8" fontWeight="700">30.01.2026</text>
          <rect x="361.500" y="547" width="194" height="16.500" fill="#fff" />
          <text x="363" y="559.500" fontFamily="Noto Sans, sans-serif" fontSize="14" fontWeight="500">Designed by Richard Draxler</text>
     </Page>
)

const IconStrip = ({ names }) => (
     <Strip>
          {names.map((name, i) => <StripButton key={i} aria-label={name}><Icon name={name} size={13} /></StripButton>)}
     </Strip>
)

const AlignPanel = () => {
     const relId = useId();
     return (
          <Panel>
               <TabBar>
                    <Tab aria-label="Fill and Stroke"><Icon name="fill" /></Tab>
                    <Tab $active aria-label="Align and Distribute"><Icon name="align" size={13} /><Icon name="close" size={10} /></Tab>
                    {['export', 'image', 'layers', 'history', 'objects'].map(name => (
                         <Tab key={name} aria-label={name}><Icon name={name} /></Tab>
                    ))}
                    <MoreTabs aria-label="More"><Icon name="down" size={12} /></MoreTabs>
               </TabBar>
               <SubTabs>
                    <SubTab $active><Icon name="align" size={11} />Align</SubTab>
                    <SubTab><Icon name="grid" size={11} />Grid</SubTab>
                    <SubTab><Icon name="circular" size={12} />Circular</SubTab>
               </SubTabs>
               <Heading>Align</Heading>
               <Option><Icon name="handles" size={12} />Alignment handles with third click</Option>
               <Option><Icon name="asGroup" size={12} />Move/align selection as group</Option>
               <PanelRow>
                    <label htmlFor={relId}>Relative to:</label>
                    <SelectWrap $w="95px">
                         <SelectBox id={relId}><option>Page</option></SelectBox>
                         <SelectArrow />
                    </SelectWrap>
               </PanelRow>
               <IconStrip names={['aRightOut', 'aLeft', 'aCenter', 'aRight', 'aLeft', 'hText']} />
               <IconStrip names={['vBottomOut', 'vTop', 'vMiddle', 'vBottom', 'vTop', 'vText']} />
               <Heading>Distribute</Heading>
               <IconStrip names={['dLeft', 'dCenter', 'dRight', 'dGap', 'dText']} />
               <IconStrip names={['dTop', 'dMid', 'dBot', 'dGapV', 'dTextV']} />
               <Heading $top="6px">Rearrange</Heading>
               <IconStrip names={['rGraph', 'swapA', 'swapB', 'swapC', 'rRandom', 'rUnclump']} />
               <Heading>Remove overlaps</Heading>
               <PanelRow $h="37px">
                    <NumberField label="H:" value="0" width="76px" step="21px" left="3px" />
                    <NumberField label="V:" value="0" width="76px" step="21px" left="3px" />
                    <StripButton aria-label="Remove overlaps"><Icon name="overlap" size={12} /></StripButton>
               </PanelRow>
               <Mark $x={53} $y={-8} $w={66} $h={41} />
               <Mark $x={-1} $y={28} $w={70} $h={36} />
               <Mark $x={46} $y={160} $w={31} $h={65} />
          </Panel>
     );
}

const swatchRows = [
     ['1a1a1a 333333 4d4d4d 666666 999999 b3b3b3 cccccc e6e6e6 ececec f2f2f2 f9f9f9',
          '77150f ea3323 808026 ffff54 377e22 75fb4c 377e7f 75fbfd 00007b 0000f5 75147b ea33f7',
          '280400 500804 7a110c a31c15 c8281e ea3223 ea4a3c ed6a60 f08a84 f4aca8 fad5d3',
          '240e0e 4a1b1b 702a2a 953736 bb4545 c8686a d38a8a dfadad eddada',
          '241c1d 483839 6c5557 917375 ac9496 c8b8b9 e3dcdc',
          '2a1407 50250a 783a12 a04c18'],
     ['c95f22 ee7530 f08a48 f2a269 f5b88b f8d0b1 fce8d8',
          '27180c 4d301c 744829 9a5f37 bf7947 cb9467 d8ad8c e4c8b3 f0e3da',
          '242220 49433e 6c6259 918375 ada194 c8c1b9 e2e0dc',
          '282208 4f4410 796821 a28a2a c8ac33 f5cd46 f7d453 f8dc6f f9e48d fbecaa fdf5d5',
          '25230e 4a451d 706a2c 97903a bcb349 c8bf6b d4cd8c e0dbae eeebd5',
          '242420 48483a 6c6b56 918f76 aca991 c8c6b5 e0e0de',
          '222b0b 455717 6a8323 90ad36'],
].map(row => row.join(' ').split(' '));

const App = () => {
     return (
          <>
               <GlobalStyle></GlobalStyle>
               <Window>
                    <TitleBar>
                         <Lights>
                              <Light $color="#ed6a5e" aria-label="Close" />
                              <Light $color="#f5bf4f" aria-label="Minimise" />
                              <Light $color="#61c554" aria-label="Zoom" />
                         </Lights>
                         <Title>*LUEDO DevBoard V0-F_Cu.svg - Inkscape</Title>
                    </TitleBar>

                    <Toolbar>
                         <IconBar groups={commands} basis="1012px" />
                         <ButtonRow $gap="6px" $left="auto">
                              <BlueButton aria-label="Snap"><Icon name="snap" /></BlueButton>
                              <BlueButton $plain aria-label="Snap options"><Icon name="left" /></BlueButton>
                         </ButtonRow>
                    </Toolbar>

                    <Toolbar $tall>
                         <IconBar groups={selection} basis="427px" isDim={(g, i) => g > 0 || i === 2} />
                         <NumberField label="X:" value="-0,001" width="94px" off tight left="7px" />
                         <NumberField label="Y:" value="0,000" width="94px" off tight />
                         <NumberField label="W:" value="73,998" width="94px" off tight />
                         <ButtonRow $gap="5px" $left="5px">
                              <BlueButton aria-label="Lock ratio"><Icon name="lock" /></BlueButton>
                         </ButtonRow>
                         <NumberField label="H:" value="53,998" width="94px" off tight />
                         <SelectWrap $w="50px" $left="6px">
                              <SelectBox $pad="9px" aria-label="Unit"><option>mm</option></SelectBox>
                              <SelectArrow $right="9px" />
                         </SelectWrap>
                         <ButtonRow $gap="5px" $left="10px">
                              {['scaleStroke', 'scaleCorner', 'moveGrad', 'movePat'].map(name => (
                                   <BlueButton key={name} aria-label={name}><Icon name={name} size={14} /></BlueButton>
                              ))}
                         </ButtonRow>
                    </Toolbar>

                    <Body>
                         <Toolbox>
                              {tools.map((group, g) => (
                                   <ToolGroup key={g}>
                                        {group.map(name => (
                                             <Tool key={name} $active={name === 'pointer'} aria-label={name}><Icon name={name} size={14} /></Tool>
                                        ))}
                                   </ToolGroup>
                              ))}
                         </Toolbox>
                         <Editor>
                              <Corner><Icon name="unlock" size={13} /></Corner>
                              <Ruler />
                              <Corner><Icon name="display" size={13} /></Corner>
                              <Ruler vertical />
                              <Canvas><Board /></Canvas>
                              <VTrack><Thumb /></VTrack>
                              <Corner />
                              <HTrack><Thumb $across /></HTrack>
                              <Corner><Dot /></Corner>
                         </Editor>
                         <Handle><Dot /><Dot /><Dot /></Handle>
                         <Side><AlignPanel /></Side>
                    </Body>

                    <Palette>
                         <BigSwatch $color="#fff" aria-label="None">
                              <svg width="28" height="29"><path d="M2 2L26 27M26 2L2 27" stroke="#b8323c" strokeWidth="2" /></svg>
                         </BigSwatch>
                         <BigSwatch $color="#000" aria-label="Black" />
                         <BigSwatch $color="#808080" aria-label="Gray" />
                         <BigSwatch $color="#fff" aria-label="White" />
                         <Swatches>
                              {swatchRows.map((row, r) => (
                                   <SwatchRow key={r}>
                                        {row.map((c, i) => <Swatch key={i} $color={'#' + c} aria-label={c} />)}
                                   </SwatchRow>
                              ))}
                         </Swatches>
                         <PaletteTools>
                              <Icon name="up" size={12} />
                              <Icon name="down" size={12} />
                              <Icon name="menu" size={12} />
                         </PaletteTools>
                    </Palette>

                    <StatusBar>
                         <FillStroke>
                              <dt>Fill:</dt><dd>N/A</dd>
                              <dt>Stroke:</dt><dd>N/A</dd>
                         </FillStroke>
                         <NumberField label="O:" value="100" width="62px" off />
                         <Layer>[root]</Layer>
                         <StatusIcon $left="17px" aria-label="Layer visible"><Icon name="eye" size={13} /></StatusIcon>
                         <StatusIcon $left="19px" aria-label="Layer lock"><Icon name="unlock" size={13} /></StatusIcon>
                         <Hint><b>Shift</b>: Add to selection; <b>Alt</b>: Select with touch-path, Cycle through objects, Forced Drag</Hint>
                         <StatusIcon $left="0" aria-label="Previous page"><Icon name="triL" size={12} /></StatusIcon>
                         <ButtonRow $gap="0" $left="10px">
                              <BlueButton $plain aria-label="Pages"><Icon name="triD" size={10} /></BlueButton>
                         </ButtonRow>
                         <StatusIcon $left="10px" aria-label="Next page"><Icon name="triR" size={12} /></StatusIcon>
                         <Position>
                              <span>X:</span><span>88,90</span>
                              <span>Y:</span><span>22,56</span>
                         </Position>
                         <NumberField label="Z:" value="216%" width="71px" left="10px" />
                         <NumberField label="R:" value="0,00°" width="80px" left="9px" />
                    </StatusBar>
               </Window>
          </>
     )
}


export default App
